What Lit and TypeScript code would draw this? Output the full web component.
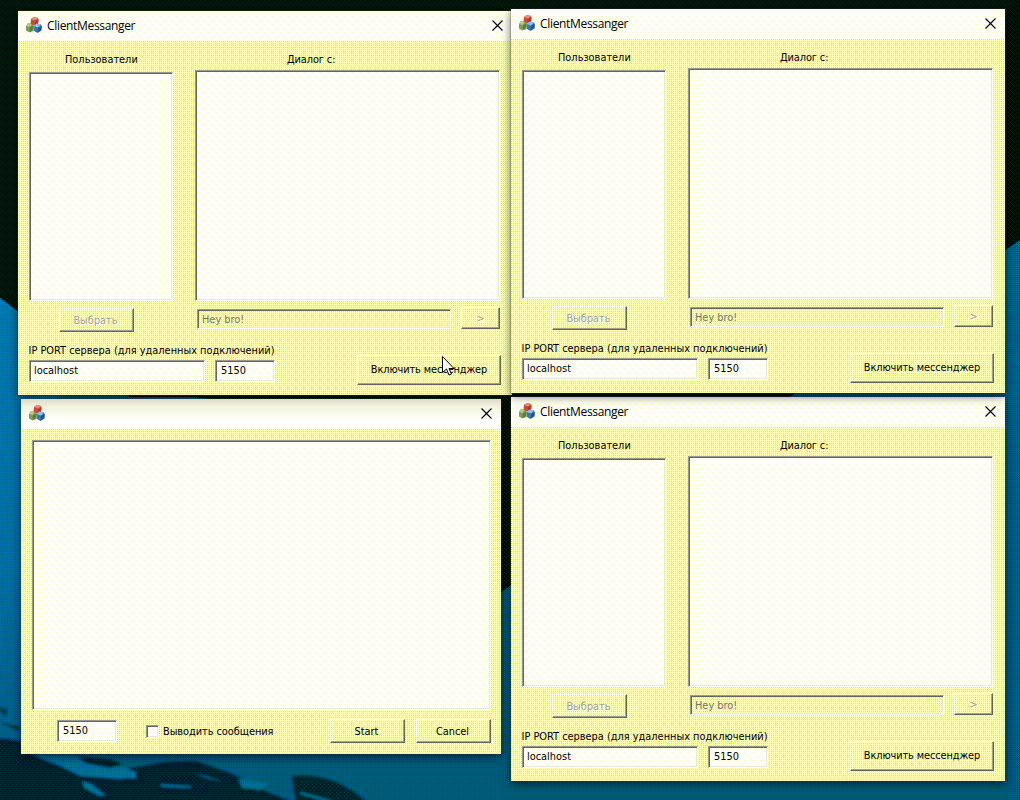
import { LitElement, html, css } from "lit";
import { customElement } from "lit/decorators.js";

const icon = html`<svg width="16" height="17" viewBox="0 0 16 17">
  <path d="M0 9l2-3 4 0 2 3-.5 5-4 1.500-3.500-2z" fill="#7d9c50"/><path d="M0 9l2-3 4 0-2 4z" fill="#b4c98a"/><path d="M4 10l3-1-.3 4-3 2z" fill="#5a7c38"/>
  <path d="M5 2l3-2 4 1 .8 2-.6 4-4 1.500-3.700-2z" fill="#cc4a38"/><path d="M5 2l3-2 4 1-3 2.500z" fill="#e88f7c"/><path d="M9 4l3-1-.3 4-3 1z" fill="#a83a30"/>
  <path d="M7.500 9l3-2.500 4.500 1 1 2-.5 4-4 2.500-3.500-2z" fill="#3a78b4"/><path d="M7.500 9l3-2.500 4.500 1-3 3z" fill="#94c0e4"/><path d="M12 11l3.500-2-.3 4-3.500 2.500z" fill="#24548a"/>
</svg>`;
const close = html`<svg class="x" width="11" height="11" viewBox="0 0 11 11"><path d="M.5.500l10 10M10.500.500l-10 10" stroke="#000" stroke-width="1.150"/></svg>`;

const common = css`
  * { box-sizing: border-box; }
  :host {
    display: flex; flex-direction: column; color: #000;
    font: 10.900px "DejaVu Sans Condensed", "DejaVu Sans", sans-serif; font-stretch: condensed;
    background: url("data:image/svg+xml,%3Csvg xmlns='http://www.w3.org/2000/svg' width='4' height='4' shape-rendering='crispEdges'%3E%3Cpath fill='%23fcfcec' d='M0 0h4v4H0z'/%3E%3Cpath fill='%23d4d4e0' d='M1 1h1v1H1zM3 1h1v1H3zM1 3h1v1H1zM3 3h1v1H3z'/%3E%3Cpath fill='%23fafab0' d='M0 0h1v1H0zM2 0h1v1H2zM0 2h1v1H0zM2 2h1v1H2z'/%3E%3C/svg%3E") fixed;
    box-shadow: 0 0 0 1px #44444440, 0 3px 9px #0009;
  }
  .title, .well {
    background: url("data:image/svg+xml,%3Csvg xmlns='http://www.w3.org/2000/svg' width='8' height='8' shape-rendering='crispEdges'%3E%3Cpath fill='%23fdfdfd' d='M0 0h8v8H0z'/%3E%3Cpath fill='%23ffffa8' d='M0 0h1v1H0zM4 4h1v1H4z'/%3E%3C/svg%3E") fixed;
  }
  .title { height: 30px; flex: none; display: flex; align-items: center; padding: 0 9.500px 1px 8px; font: 12px "Open Sans", sans-serif; }
  .name { margin-left: 5px; letter-spacing: -.33px; }
  .x { margin-left: auto; }
  .well { border: 1px solid; border-color: #98988c #fff #fff #98988c; box-shadow: inset 1px 1px #66665e, inset -1px -1px #e6e6dc; }
  .field { height: 22px; padding: 2px 4px; line-height: 16px; white-space: nowrap; }
  .off { background: none; color: #74746a; }
  .btn {
    display: flex; align-items: center; justify-content: center; height: 24px; white-space: nowrap;
    border: 1px solid; border-color: #fffffa #66665e #66665e #fffffa; box-shadow: inset -1px -1px #a0a094;
  }
  .dim { color: #a0a094; text-shadow: 1px 1px #fff; }
  .t { white-space: nowrap; }
`;

@customElement("client-window")
export class ClientWindow extends LitElement {
  static styles = [common, css`
    .body { flex: 1; display: flex; flex-direction: column; padding: 0 12px 0 11px; }
    .labels { display: flex; height: 29px; padding-top: 12px; }
    .l1 { width: 258px; padding-left: 36px; }
    .l2 { letter-spacing: -.1px; }
    .lists { display: flex; justify-content: space-between; align-items: flex-end; height: 231px; }
    .users { width: 144px; height: 229px; }
    .dialog { width: 305px; height: 231px; }
    .row { display: flex; height: 33px; padding-top: 7px; }
    .pick { width: 75px; margin: 0 0 0 30px; padding-right: 2px; }
    .msg { width: 254px; height: 20px; margin: 1px 0 0 63px; padding-top: 1px; line-height: 18px; }
    .send { width: 39px; height: 22px; margin: -1px 0 0 10px; }
    .foot { display: flex; justify-content: space-between; margin-right: -1px; }
    .ip { padding-top: 10px; margin-left: -.5px; }
    .pair { display: flex; gap: 10px; margin: 3px 0 0 .5px; }
    .host { width: 176px; }
    .port { width: 60px; padding-left: 5px; }
    .on { width: 144px; height: 30px; margin-top: 21px; padding-bottom: 2px; letter-spacing: -.11px; }
  `];
  render() {
    return html`<div class="title">${icon}<span class="name">ClientMessanger</span>${close}</div>
      <div class="body">
        <div class="labels"><span class="l1">Пользователи</span><span class="l2">Диалог с:</span></div>
        <div class="lists"><div class="well users"></div><div class="well dialog"></div></div>
        <div class="row"><div class="btn dim pick">Выбрать</div><div class="well field off msg">Hey bro!</div><div class="btn dim send">&gt;</div></div>
        <div class="foot"><div class="ip"><div class="t">IP PORT сервера (для удаленных подключений)</div>
          <div class="pair"><div class="well field host">localhost</div><div class="well field port">5150</div></div></div>
          <div class="btn on">Включить мессенджер</div></div>
      </div>`;
  }
}

@customElement("server-window")
export class ServerWindow extends LitElement {
  static styles = [common, css`
    .title { background: linear-gradient(#b8b89880, #e8e8c080 8px, #fff0 20px), #fefefa; }
    .body { flex: 1; padding: 11px 10px 0 11px; }
    .log { height: 270px; }
    .row { display: flex; align-items: center; padding: 9px 0 0 25px; }
    .port { width: 60px; padding-left: 5px; }
    .check { width: 13px; height: 13px; margin-left: 29px; }
    .t { margin-left: 4px; width: 167px; letter-spacing: -.05px; }
    .b { width: 75px; padding-right: 2px; }
    .b + .b { margin-left: 11px; }
  `];
  render() {
    return html`<div class="title">${icon}${close}</div><div class="body"><div class="well log"></div>
      <div class="row"><div class="well field port">5150</div><div class="well check"></div><span class="t">Выводить сообщения</span>
      <div class="btn b">Start</div><div class="btn b">Cancel</div></div></div>`;
  }
}

@customElement("app-root")
export class AppRoot extends LitElement {
  static styles = css`
    :host { display: block; position: relative; width: 1020px; height: 800px; overflow: hidden; background: #000c08; }
    .wall { position: absolute; inset: 0; }
    .win { position: absolute; width: 494px; height: 384px; }
    .w1 { left: 18px; top: 11px; }
    .w2 { left: 511px; top: 9px; }
    .w4 { left: 511px; top: 397px; }
    .w3 { left: 21px; top: 399px; width: 480px; height: 355px; }
    .cursor { position: absolute; left: 442px; top: 356px; }
  `;
  render() {
    return html`
      <svg class="wall" width="1020" height="800">
        <defs>
          <linearGradient id="b" x1="0" y1="0" x2="0" y2="1"><stop offset="0" stop-color="#007ac4"/><stop offset=".6" stop-color="#006eb4"/><stop offset="1" stop-color="#005a94"/></linearGradient>
          <linearGradient id="r" x1="0" y1="0" x2="0" y2="1"><stop offset="0" stop-color="#006494"/><stop offset=".5" stop-color="#005c8c"/><stop offset="1" stop-color="#005a88"/></linearGradient>
          <pattern id="d" width="4" height="4" patternUnits="userSpaceOnUse" shape-rendering="crispEdges"><path d="M1 1h1v1h-1zM3 3h1v1h-1zM3 1h1v1h-1zM1 3h1v1h-1z" fill="#001040" opacity=".5"/><path d="M0 0h1v1h-1zM2 2h1v1h-1z" fill="#008040" opacity=".2"/></pattern>
          <filter id="s" x="-5%" y="-20%" width="110%" height="140%"><feGaussianBlur stdDeviation="1.200"/></filter>
        </defs>
        <path d="M0 298L130 397H790L1020 240V800H0z" fill="url(#r)"/>
        <path d="M130 390H790L501 592V420H400z" fill="#000c08"/>
        <path d="M0 298L60 343V760H0z" fill="url(#b)"/>
        <g filter="url(#s)">
          <path d="M-5 738L20 741 45 760 75 766 120 770 165 762 195 761 230 773 262 790 300 805H-5z" fill="#011e2e"/>
          <path d="M30 754L78 756 90 762 125 768 136 772 136 778 118 779 95 777 80 776 60 766zM82 781l10 3 13 11-6 1-15-8zM160 784l32 2-3 2-27-1zM193 773l12 3 18 6-14-3zM238 779l30 4-8 7-18-2zM282 786l14 3z" fill="#0070a6"/>
          <path d="M78 757l30 2 14 5-12 4-25-5z" fill="#011e2e"/>
          <path d="M292 776Q335 772 368 804H296z" fill="#01202e"/>
          <path d="M-5 705l12 5-2 6zM0 722l20 5-2 4zM0 732l8 4z" fill="#02304c"/>
          <path d="M300 793L336 803" stroke="#0080a8" stroke-width="2"/>
        </g>
        <rect width="1020" height="800" fill="url(#d)"/>
      </svg>
      <client-window class="win w1"></client-window>
      <server-window class="win w3"></server-window>
      <client-window class="win w4"></client-window>
      <client-window class="win w2"></client-window>
      <svg class="cursor" width="13" height="20" viewBox="0 0 13 20"><path d="M.5.500v16l4-3.500 2.500 6 2.500-1-2.500-5.500h5z" fill="#fffff4" stroke="#000"/></svg>`;
  }
}
